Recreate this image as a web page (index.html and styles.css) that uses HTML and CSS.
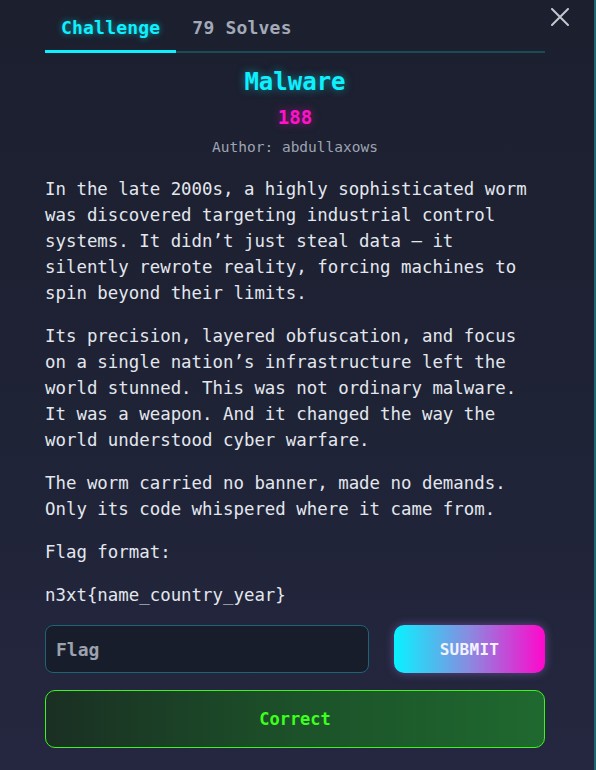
FILE: index.html
```html
<!DOCTYPE html>
<html lang="en">
<head>
<meta charset="utf-8">
<title>Malware</title>
<link rel="stylesheet" href="styles.css">
</head>
<body>
<div class="modal">
  <button class="close" aria-label="Close">
    <svg width="18" height="18" viewBox="0 0 18 18"><path d="M1 1 L17 17 M17 1 L1 17" stroke="#c3c7cf" stroke-width="2" stroke-linecap="round" fill="none"/></svg>
  </button>
  <nav class="tabs">
    <div class="tab active">Challenge</div>
    <div class="tab">79 Solves</div>
  </nav>
  <h1 class="title">Malware</h1>
  <div class="points">188</div>
  <div class="author">Author: abdullaxows</div>
  <div class="desc">
    <p>In the late 2000s, a highly sophisticated worm was discovered targeting industrial control systems. It didn’t just steal data — it silently rewrote reality, forcing machines to spin beyond their limits.</p>
    <p>Its precision, layered obfuscation, and focus on a single nation’s infrastructure left the world stunned. This was not ordinary malware. It was a weapon. And it changed the way the world understood cyber warfare.</p>
    <p>The worm carried no banner, made no demands. Only its code whispered where it came from.</p>
    <p>Flag format:</p>
    <p>n3xt{name_country_year}</p>
  </div>
  <form class="submit-row">
    <input class="flag-input" type="text" placeholder="Flag">
    <button class="submit" type="button">SUBMIT</button>
  </form>
  <div class="result">Correct</div>
</div>
</body>
</html>
```

FILE: styles.css
```css
* { box-sizing: border-box; }
html, body { margin: 0; padding: 0; }
body {
  width: 596px;
  height: 770px;
  overflow: hidden;
  background: linear-gradient(180deg, #1b1f2e 0%, #1e2234 45%, #24273f 100%);
  font-family: "DejaVu Sans Mono", "Liberation Mono", monospace;
  color: #e3e7ee;
}
.modal {
  position: relative;
  width: 596px;
  height: 770px;
  padding: 6px 49px 0 45px;
  border-right: 2px solid #1d6572;
}
.close {
  position: absolute;
  top: 8px;
  left: 551px;
  width: 18px;
  height: 18px;
  padding: 0;
  border: 0;
  background: none;
  display: flex;
}
.tabs {
  display: flex;
  border-bottom: 2px solid #1a4c58;
}
.tab {
  padding: 10px 16px;
  font-size: 18px;
  line-height: 24px;
  font-weight: bold;
  letter-spacing: 0.2px;
  color: #a3a9b7;
  border-bottom: 3px solid transparent;
  margin-bottom: -2px;
}
.tab.active {
  color: #0ff0ff;
  border-bottom-color: #0ff0ff;
  text-shadow: 0 0 6px rgba(0, 240, 255, 0.55);
}
.title {
  margin: 14px 0 0;
  text-align: center;
  font-size: 24px;
  line-height: 30px;
  color: #0ff0ff;
  text-shadow: 0 0 8px rgba(0, 240, 255, 0.5);
}
.points {
  margin-top: 7px;
  text-align: center;
  font-size: 19px;
  line-height: 26px;
  font-weight: bold;
  color: #ff12c9;
  text-shadow: 0 0 8px rgba(255, 18, 201, 0.5);
}
.author {
  margin-top: 7px;
  text-align: center;
  font-size: 14.5px;
  line-height: 20px;
  color: #9ea4b2;
}
.desc {
  margin-top: 19px;
  font-size: 17.4px;
  line-height: 26px;
}
.desc p { margin: 0 0 17px; }
.desc p:last-child { margin-bottom: 0; }
.submit-row {
  display: flex;
  gap: 25px;
  margin: 17px 0 0;
}
.flag-input {
  width: 324px;
  height: 48px;
  padding: 0 10px;
  border: 1px solid #1d6474;
  border-radius: 8px;
  background: #181d2c;
  font-family: inherit;
  font-size: 18px;
  font-weight: bold;
  color: #e3e7ee;
  outline: none;
}
.flag-input::placeholder { color: #9ca2ad; }
.submit {
  width: 151px;
  height: 48px;
  border: 0;
  border-radius: 10px;
  background: linear-gradient(90deg, #08f2ff 0%, #8a8ae0 50%, #ff08cc 100%);
  box-shadow: 0 0 10px rgba(170, 120, 240, 0.45);
  font-family: inherit;
  font-size: 16px;
  font-weight: bold;
  color: #f4f2ff;
  letter-spacing: 0.3px;
}
.result {
  margin-top: 17px;
  height: 58px;
  display: flex;
  align-items: center;
  justify-content: center;
  border: 1px solid #3cf51e;
  border-radius: 10px;
  background: linear-gradient(90deg, #1a2f23 0%, #1c5129 50%, #1f692f 100%);
  font-size: 17px;
  font-weight: bold;
  color: #3dff1f;
}
```
